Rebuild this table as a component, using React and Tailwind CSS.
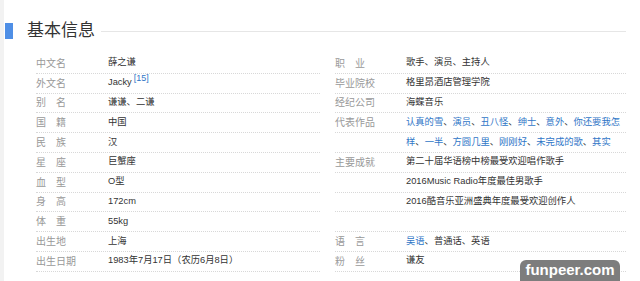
const left = [
  { label: '中文名', value: '薛之谦' },
  { label: '外文名', value: 'Jacky', sup: '[15]' },
  { label: '别名', value: '谦谦、二谦' },
  { label: '国籍', value: '中国' },
  { label: '民族', value: '汉' },
  { label: '星座', value: '巨蟹座' },
  { label: '血型', value: 'O型' },
  { label: '身高', value: '172cm' },
  { label: '体重', value: '55kg' },
  { label: '出生地', value: '上海' },
  { label: '出生日期', value: '1983年7月17日（农历6月8日）' },
]

const right = [
  { label: '职业', value: '歌手、演员、主持人' },
  { label: '毕业院校', value: '格里昂酒店管理学院' },
  { label: '经纪公司', value: '海蝶音乐' },
  { label: '代表作品', links: ['认真的雪', '演员', '丑八怪', '绅士', '意外', '你还要我怎'] },
  { label: '', links: ['样', '一半', '方圆几里', '刚刚好', '未完成的歌', '其实'] },
  { label: '主要成就', value: '第二十届华语榜中榜最受欢迎唱作歌手' },
  { label: '', value: '2016Music Radio年度最佳男歌手' },
  { label: '', value: '2016酷音乐亚洲盛典年度最受欢迎创作人' },
  { label: '', value: '' },
  { label: '语言', links: ['吴语'], rest: '、普通话、英语' },
  { label: '粉丝', value: '谦友' },
]

function Label({ text }) {
  if (text.length === 2) {
    return (
      <span className="flex w-[30px] justify-between">
        <span>{text[0]}</span>
        <span>{text[1]}</span>
      </span>
    )
  }
  return <span>{text}</span>
}

function Row({ item, labelWidth }) {
  return (
    <div className="flex h-[19.8px] items-center border-b border-dotted border-[#d8d8d8]">
      <div className={`${labelWidth} shrink-0 text-[10px] text-[#999]`}>
        <Label text={item.label} />
      </div>
      <div className="whitespace-nowrap text-[9.3px] text-[#333]">
        {item.links ? (
          <>
            {item.links.map((l, i) => (
              <span key={i}>
                <span className="text-[#2f76c7]">{l}</span>
                {i < item.links.length - 1 && '、'}
              </span>
            ))}
            {item.rest}
          </>
        ) : (
          item.value
        )}
        {item.sup && (
          <sup className="ml-[2px] text-[9px] text-[#2f76c7]">{item.sup}</sup>
        )}
      </div>
    </div>
  )
}

export default function App() {
  return (
    <div
      className="relative flex h-[281px] w-[640px] overflow-hidden bg-white"
      style={{ fontFamily: '"Liberation Sans", "Noto Sans CJK SC", sans-serif' }}
    >
      <div className="w-[4px] shrink-0 bg-[#f2f2f2]" />
      <div className="flex-1">
        <div className="mt-[23px] flex items-center">
          <div className="ml-[1px] h-[16px] w-[8px] bg-[#4f8fe6]" />
          <h2 className="ml-[14px] text-[17px] leading-[16px] text-[#333]">基本信息</h2>
          <div className="ml-[6px] mr-[14px] h-px flex-1 bg-[#e6e6e6]" />
        </div>

        <div className="mt-[15px] flex">
          <div className="ml-[21px] w-[295px] pl-[11px]">
            {left.map((item, i) => (
              <Row key={i} item={item} labelWidth="w-[72px]" />
            ))}
          </div>
          <div className="ml-[8px] w-[298px] pl-[7px]">
            {right.map((item, i) => (
              <Row key={i} item={item} labelWidth="w-[71px]" />
            ))}
          </div>
        </div>
      </div>

      <div className="absolute bottom-0 right-[20px] flex h-[21px] w-[100px] items-center justify-center rounded-t-[6px] bg-[#7d7d7d] text-[15px] font-bold text-white">
        funpeer.com
      </div>
    </div>
  )
}
